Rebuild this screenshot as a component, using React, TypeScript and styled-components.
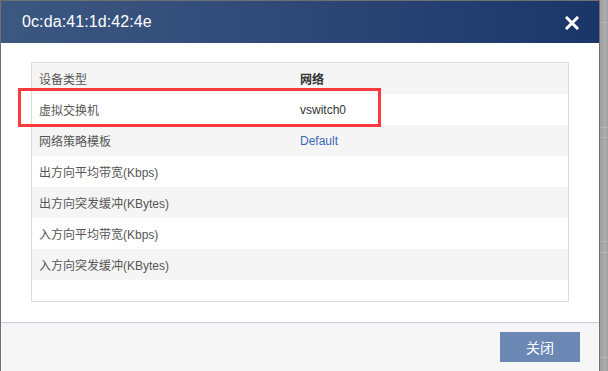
import styled, { createGlobalStyle } from 'styled-components';

const GlobalStyle = createGlobalStyle`
  html, body {
    margin: 0;
    padding: 0;
    background: #a5a5a5;
    font-family: "Liberation Sans", "Noto Sans CJK SC", sans-serif;
    overflow: hidden;
  }
`;

const Backdrop = styled.div`
  width: 608px;
  height: 371px;
  position: relative;
  background:
    linear-gradient(#b4b4b4, #b4b4b4) 600px 22px / 8px 1px no-repeat,
    linear-gradient(#b4b4b4, #b4b4b4) 600px 127px / 8px 1px no-repeat,
    linear-gradient(#b4b4b4, #b4b4b4) 600px 137px / 8px 1px no-repeat,
    linear-gradient(#b4b4b4, #b4b4b4) 600px 241px / 8px 1px no-repeat,
    linear-gradient(#b4b4b4, #b4b4b4) 600px 252px / 8px 1px no-repeat,
    linear-gradient(#b4b4b4, #b4b4b4) 600px 357px / 8px 1px no-repeat,
    linear-gradient(90deg, #a2a2a2 0, #a2a2a2 603px, #acacac 603px, #acacac 606px, #a3a3a3 606px);
  overflow: hidden;
`;

const Dialog = styled.div`
  width: 600px;
  box-sizing: border-box;
  border: 1px solid #707070;
  border-bottom: none;
  background: #fff;
  display: flex;
  flex-direction: column;
`;

const Header = styled.div`
  height: 42px;
  display: flex;
  align-items: center;
  justify-content: space-between;
  padding: 0 20px 0 21px;
  background: linear-gradient(90deg, #3b5881 0%, #2f4a77 45%, #1a3669 100%);
`;

const Title = styled.div`
  color: #fff;
  font-size: 16px;
  letter-spacing: 0.1px;
`;

const CloseIcon = styled.svg`
  width: 14px;
  height: 14px;
  margin-top: 1px;
`;

const Body = styled.div`
  padding: 19px 30px 20px 30px;
  position: relative;
`;

const Table = styled.div`
  height: 240px;
  box-sizing: border-box;
  border: 1px solid #dcdcdc;
`;

const Row = styled.div<{ $striped: boolean }>`
  display: grid;
  grid-template-columns: 268px 1fr;
  height: 31px;
  align-items: center;
  background: ${(p) => (p.$striped ? '#f5f5f5' : '#fff')};
  font-size: 12px;
`;

const Label = styled.div`
  padding-left: 7px;
  color: #555;
`;

const Value = styled.div<{ $kind?: 'head' | 'link' }>`
  color: ${(p) => (p.$kind === 'link' ? '#3a68b8' : '#333')};
  font-weight: ${(p) => (p.$kind === 'head' ? 'bold' : 'normal')};
`;

const Highlight = styled.div`
  position: absolute;
  left: 17px;
  top: 45px;
  width: 363px;
  height: 39px;
  box-sizing: border-box;
  border: 3px solid #fc3a3d;
  pointer-events: none;
`;

const Footer = styled.div`
  border-top: 1px solid #cdc9dd;
  background: #f6f6f6;
  height: 52px;
  display: flex;
  justify-content: flex-end;
  align-items: flex-start;
  padding: 9px 19px 0 0;
  box-sizing: border-box;
`;

const CloseButton = styled.button`
  width: 80px;
  height: 30px;
  border: none;
  background: #6b88b5;
  color: #fff;
  font-size: 14px;
  font-family: "Liberation Sans", "Noto Sans CJK SC", sans-serif;
  cursor: pointer;
`;

const rows: { label: string; value: string; kind?: 'head' | 'link' }[] = [
  { label: '设备类型', value: '网络', kind: 'head' },
  { label: '虚拟交换机', value: 'vswitch0' },
  { label: '网络策略模板', value: 'Default', kind: 'link' },
  { label: '出方向平均带宽(Kbps)', value: '' },
  { label: '出方向突发缓冲(KBytes)', value: '' },
  { label: '入方向平均带宽(Kbps)', value: '' },
  { label: '入方向突发缓冲(KBytes)', value: '' },
];

const App = () => {
  return (
    <Backdrop>
      <GlobalStyle />
      <Dialog>
        <Header>
          <Title>0c:da:41:1d:42:4e</Title>
          <CloseIcon viewBox="0 0 14 14">
            <path d="M2 2L12 12M12 2L2 12" stroke="#fff" strokeWidth="3" strokeLinecap="square" />
          </CloseIcon>
        </Header>
        <Body>
          <Table>
            {rows.map((r, i) => (
              <Row key={r.label} $striped={i % 2 === 0}>
                <Label>{r.label}</Label>
                <Value $kind={r.kind}>{r.value}</Value>
              </Row>
            ))}
          </Table>
          <Highlight />
        </Body>
        <Footer>
          <CloseButton>关闭</CloseButton>
        </Footer>
      </Dialog>
    </Backdrop>
  );
};

export default App;
